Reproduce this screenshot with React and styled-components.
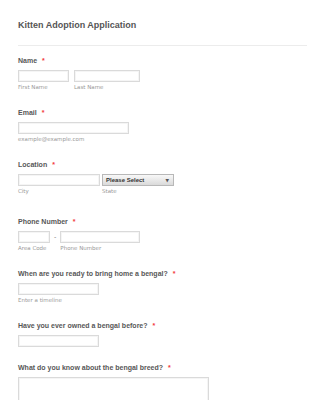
import React from 'react'
import styled, { createGlobalStyle } from 'styled-components'

const GlobalStyle = createGlobalStyle`
  html, body {
    margin: 0;
    padding: 0;
    background: #fff;
  }
  body {
    font-family: "Liberation Sans", Arial, sans-serif;
  }
`

const Page = styled.div`
  width: 325px;
  box-sizing: border-box;
  padding: 19px 18px 0;
  overflow: hidden;
  height: 400px;
`

const Title = styled.h1`
  margin: 0;
  font-size: 9px;
  line-height: 12px;
  font-weight: bold;
  color: #555;
`

const Divider = styled.div`
  height: 1px;
  background: #ececec;
  margin: 14px 0 10px;
`

const Field = styled.div`
  padding-bottom: ${(p) => p.$gap ?? 17}px;
`

const Label = styled.div`
  font-size: 7px;
  line-height: 10px;
  font-weight: bold;
  color: #575757;
  margin-bottom: 4px;
`

const Req = styled.span`
  color: #f23a3c;
  margin-left: 5px;
`

const Row = styled.div`
  display: flex;
  align-items: flex-start;
  gap: ${(p) => p.$gap ?? 5}px;
`

const Col = styled.div`
  display: flex;
  flex-direction: column;
  width: ${(p) => p.$w}px;
`

const Input = styled.div`
  box-sizing: border-box;
  width: ${(p) => (p.$w ? `${p.$w}px` : '100%')};
  height: ${(p) => p.$h ?? 12}px;
  border: 1px solid #dadada;
  box-shadow: inset 0 0 0 1px #f5f5f5;
  background: #fff;
`

const Sub = styled.div`
  margin-top: 1px;
  font-family: "DejaVu Sans", Verdana, sans-serif;
  font-size: 5.5px;
  line-height: 8px;
  color: #999;
  white-space: nowrap;
`

const Select = styled.div`
  box-sizing: border-box;
  height: 12px;
  border: 1px solid #b8b8b8;
  background: linear-gradient(#f8f8f8, #dadada);
  display: flex;
  align-items: center;
  justify-content: space-between;
  padding: 0 4px 0 3px;
  font-size: 6px;
  font-weight: bold;
  color: #333;
`

const Arrow = styled.span`
  font-family: "DejaVu Sans", sans-serif;
  font-size: 4.5px;
  color: #555;
`

const Dash = styled.span`
  font-size: 7px;
  line-height: 12px;
  color: #888;
`

const App = () => {
  return (
    <>
      <GlobalStyle />
      <Page>
        <Title>Kitten Adoption Application</Title>
        <Divider />

        <Field>
          <Label>Name<Req>*</Req></Label>
          <Row>
            <Col $w={51}><Input /><Sub>First Name</Sub></Col>
            <Col $w={66}><Input /><Sub>Last Name</Sub></Col>
          </Row>
        </Field>

        <Field>
          <Label>Email<Req>*</Req></Label>
          <Input $w={111} />
          <Sub>example@example.com</Sub>
        </Field>

        <Field $gap={22}>
          <Label>Location<Req>*</Req></Label>
          <Row $gap={2}>
            <Col $w={82}><Input /><Sub>City</Sub></Col>
            <Col $w={72}>
              <Select>Please Select<Arrow>▼</Arrow></Select>
              <Sub>State</Sub>
            </Col>
          </Row>
        </Field>

        <Field>
          <Label>Phone Number<Req>*</Req></Label>
          <Row $gap={4}>
            <Col $w={32}><Input /><Sub>Area Code</Sub></Col>
            <Dash>-</Dash>
            <Col $w={80}><Input /><Sub>Phone Number</Sub></Col>
          </Row>
        </Field>

        <Field>
          <Label>When are you ready to bring home a bengal?<Req>*</Req></Label>
          <Input $w={81} />
          <Sub>Enter a timeline</Sub>
        </Field>

        <Field $gap={16}>
          <Label>Have you ever owned a bengal before?<Req>*</Req></Label>
          <Input $w={81} />
        </Field>

        <Field>
          <Label>What do you know about the bengal breed?<Req>*</Req></Label>
          <Input $w={191} $h={60} />
        </Field>
      </Page>
    </>
  )
}

export default App
